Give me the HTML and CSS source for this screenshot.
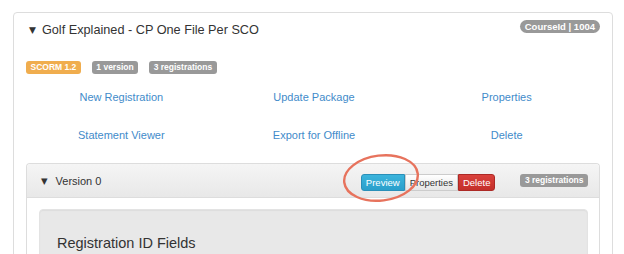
FILE: index.html
```html
<!DOCTYPE html>
<html lang="en">
<head>
    <meta charset="UTF-8">
    <title>Course Library</title>
    <link rel="stylesheet" href="styles.css">
</head>
<body>
    <div class="course">
        <div class="course-head">
            <h2 class="course-title"><span class="caret">&#9660;</span>Golf Explained - CP One File Per SCO</h2>
            <span class="badge pill">CourseId | 1004</span>
        </div>

        <div class="tags">
            <span class="badge warning">SCORM 1.2</span>
            <span class="badge">1 version</span>
            <span class="badge">3 registrations</span>
        </div>

        <div class="actions">
            <a href="#">New Registration</a>
            <a href="#">Update Package</a>
            <a href="#">Properties</a>
            <a href="#">Statement Viewer</a>
            <a href="#">Export for Offline</a>
            <a href="#">Delete</a>
        </div>

        <div class="version">
            <div class="version-head">
                <span class="version-title"><span class="caret small">&#9660;</span>Version 0</span>
                <div class="btn-group">
                    <button class="btn info">Preview</button>
                    <button class="btn">Properties</button>
                    <button class="btn danger">Delete</button>
                </div>
                <span class="badge">3 registrations</span>
            </div>
            <div class="version-body">
                <div class="well">
                    <h3>Registration ID Fields</h3>
                </div>
            </div>

            <svg class="highlight" width="82" height="52" viewBox="0 0 82 52">
                <ellipse cx="39" cy="25" rx="37" ry="22.5" fill="none" stroke="#e7735d" stroke-width="2.4" transform="rotate(-7 39 25)"/>
            </svg>
        </div>
    </div>
</body>
</html>
```

FILE: styles.css
```css
body {
    margin: 0;
    background-color: #fff;
    font-family: "Liberation Sans", Arial, sans-serif;
    color: #333;
}

.course {
    margin: 12px 12px 0 13px;
    width: 598px;
    height: 250px;
    border: 1px solid #ddd;
    border-radius: 4px;
}

.course-head {
    display: flex;
    justify-content: space-between;
    align-items: flex-start;
    padding: 7px 12px 0 15px;
}

.course-title {
    margin: 0;
    font-size: 12.7px;
    font-weight: normal;
    line-height: 20px;
    color: #333;
}

.caret {
    display: inline-block;
    font-family: "DejaVu Sans", sans-serif;
    font-size: 9px;
    margin-right: 6px;
    vertical-align: 1px;
}

.caret.small {
    font-size: 8.5px;
    margin-right: 8px;
}

.badge {
    display: inline-block;
    height: 13px;
    line-height: 13px;
    padding: 0 4.5px;
    border-radius: 3px;
    background-color: #999;
    color: #fff;
    font-size: 8.5px;
    font-weight: bold;
}

.badge.warning {
    background-color: #f0ad4e;
}

.badge.pill {
    font-size: 9.5px;
    padding: 0 5px;
    border-radius: 7px;
}

.tags {
    display: flex;
    gap: 11px;
    margin-top: 21px;
    padding-left: 12px;
}

.actions {
    display: grid;
    grid-template-columns: repeat(3, 1fr);
    row-gap: 20px;
    margin-top: 14px;
    padding: 0 9px 0 11px;
    text-align: center;
}

.actions a {
    font-size: 11px;
    line-height: 18px;
    color: #428bca;
    text-decoration: none;
}

.version {
    position: relative;
    margin: 19px 12px 0 12px;
    border: 1px solid #ddd;
    border-bottom: none;
    border-radius: 4px 4px 0 0;
}

.version-head {
    display: flex;
    align-items: center;
    height: 33px;
    padding: 0 11px 0 14px;
    background: linear-gradient(#f5f5f5, #e8e8e8);
    border-bottom: 1px solid #ddd;
    border-radius: 4px 4px 0 0;
}

.version-title {
    flex: 1;
    font-size: 11px;
}

.btn-group {
    display: flex;
    margin-right: 25px;
    margin-top: 3px;
}

.btn {
    height: 17px;
    padding: 0 4px;
    font-family: "Liberation Sans", Arial, sans-serif;
    font-size: 9.5px;
    color: #333;
    background: linear-gradient(#fff, #e6e6e6);
    border: 1px solid #ccc;
    border-radius: 0;
}

.btn.info {
    color: #fff;
    background: linear-gradient(#3bb4dc, #2a9fcb);
    border-color: #2a8fb8;
    border-radius: 3px 0 0 3px;
}

.btn.danger {
    color: #fff;
    background: linear-gradient(#d9413c, #c42f2a);
    border-color: #ac2925;
    border-radius: 0 3px 3px 0;
}

.version-body {
    padding: 11px 11px 0 12px;
    background-color: #fff;
}

.well {
    height: 60px;
    padding: 24px 17px 0;
    background-color: #e8e8e8;
    border: 1px solid #e3e3e3;
    border-radius: 4px;
    box-shadow: inset 0 1px 1px rgba(0, 0, 0, 0.05);
}

.well h3 {
    margin: 0;
    font-size: 14.5px;
    font-weight: normal;
    line-height: 18px;
    color: #333;
}

.highlight {
    position: absolute;
    left: 315px;
    top: -11px;
}
```
